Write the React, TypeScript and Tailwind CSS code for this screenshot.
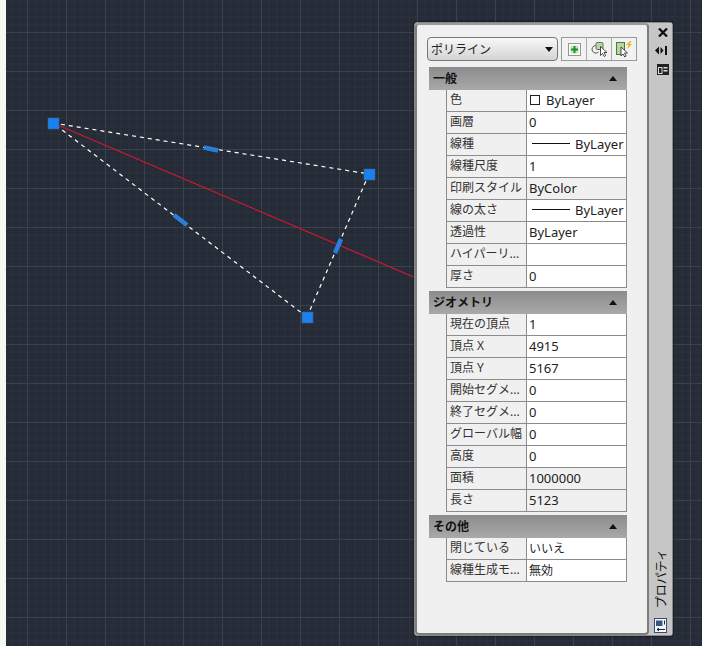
import React from "react";

type Row = { k: string; v: string; ro?: boolean; jp?: boolean; kind?: "color" | "line" };

const sections: { title: string; rows: Row[] }[] = [
  {
    title: "一般",
    rows: [
      { k: "色", v: "ByLayer", kind: "color" },
      { k: "画層", v: "0" },
      { k: "線種", v: "ByLayer", kind: "line" },
      { k: "線種尺度", v: "1" },
      { k: "印刷スタイル", v: "ByColor", ro: true },
      { k: "線の太さ", v: "ByLayer", kind: "line" },
      { k: "透過性", v: "ByLayer" },
      { k: "ハイパーリ...", v: "" },
      { k: "厚さ", v: "0" },
    ],
  },
  {
    title: "ジオメトリ",
    rows: [
      { k: "現在の頂点", v: "1" },
      { k: "頂点 X", v: "4915" },
      { k: "頂点 Y", v: "5167" },
      { k: "開始セグメ...", v: "0" },
      { k: "終了セグメ...", v: "0" },
      { k: "グローバル幅", v: "0" },
      { k: "高度", v: "0" },
      { k: "面積", v: "1000000", ro: true },
      { k: "長さ", v: "5123", ro: true },
    ],
  },
  {
    title: "その他",
    rows: [
      { k: "閉じている", v: "いいえ", jp: true },
      { k: "線種生成モ...", v: "無効", jp: true },
    ],
  },
];

const Grip = ({ x, y }: { x: number; y: number }) => (
  <rect x={x - 5} y={y - 5} width="11" height="11" fill="#1a82f0" stroke="#3f5f85" strokeWidth="0.6" />
);

const MidGrip = ({ x1, y1, x2, y2 }: { x1: number; y1: number; x2: number; y2: number }) => (
  <line x1={x1} y1={y1} x2={x2} y2={y2} stroke="#2a7fdc" strokeWidth="4.500" />
);

const Drawing = () => (
  <svg width="702" height="646" viewBox="0 0 702 646" className="block">
    <line x1="53" y1="123" x2="416" y2="278" stroke="#d01830" strokeWidth="1.200" />
    <g stroke="#ffffff" strokeWidth="1.200" strokeDasharray="4 4" fill="none">
      <line x1="53" y1="123" x2="369" y2="174" />
      <line x1="369" y1="174" x2="307" y2="317" />
      <line x1="307" y1="317" x2="53" y2="123" />
    </g>
    <MidGrip x1={204} y1={147.5} x2={218} y2={150.5} />
    <MidGrip x1={341} y1={239} x2={335} y2={253} />
    <MidGrip x1={174} y1={215} x2={187} y2={225} />
    <Grip x={53} y={123} />
    <Grip x={369} y={174} />
    <Grip x={307} y={317} />
  </svg>
);

const PropRow = ({ row }: { row: Row }) => (
  <div className="flex h-[22px] border-b border-x border-[#8c8c8c] ml-[17px]">
    <div className="w-[80px] shrink-0 border-r border-[#8c8c8c] bg-[#f0f0f0] pl-[3px] text-[12px] leading-[20px] text-[#333] whitespace-nowrap overflow-hidden">
      {row.k}
    </div>
    <div
      className={`flex-1 flex items-center pl-[2px] leading-[20px] text-[#222] whitespace-nowrap overflow-hidden ${
        row.jp ? "text-[12px]" : "text-[13px] pb-[2px]"
      } ${row.ro ? "bg-[#f0f0f0]" : "bg-white"}`}
    >
      {row.kind === "color" && <span className="w-[10px] h-[10px] border border-[#222] bg-white ml-[1px] mr-[6px]" />}
      {row.kind === "line" && <span className="w-[38px] h-px bg-[#111] ml-[3px] mr-[5px]" />}
      {row.v}
    </div>
  </div>
);

const Toolbar = () => (
  <div className="flex items-center gap-[3px]">
    <div className="w-[131px] h-[24px] rounded-[4px] border border-[#777] bg-gradient-to-b from-[#f8f8f8] to-[#d4d4d4] flex items-center justify-between pl-[3px] pr-[4px]">
      <span className="text-[12px] text-[#222] pt-[2px]">ポリライン</span>
      <svg width="8" height="5" viewBox="0 0 8 5">
        <path d="M0 0h8L4 5z" fill="#111" />
      </svg>
    </div>
    <div className="flex h-[24px] w-[76px] border border-[#999] bg-[#f2f2f2]">
      <div className="flex-1 border-r border-[#aaa] flex items-center justify-center">
        <svg width="15" height="15" viewBox="0 0 15 15">
          <rect x="1.500" y="1.500" width="12" height="12" fill="#fff" stroke="#333" strokeDasharray="1 1" />
          <rect x="3.500" y="3.500" width="8" height="8" fill="#c8e6bd" />
          <path d="M7.500 4v7M4 7.500h7" stroke="#12932a" strokeWidth="2" />
        </svg>
      </div>
      <div className="flex-1 border-r border-[#aaa] flex items-center justify-center">
        <svg width="20" height="18" viewBox="0 0 20 18">
          <rect x="7" y="2.500" width="7" height="7" rx="1" fill="#b9d6a4" stroke="#5e7c55" />
          <path d="M6.500 5.500a3.800 3.800 0 1 0 3 6.500" fill="none" stroke="#555" />
          <path d="M11.500 6.500v9l2-2 1.800 3 1.400-1-1.700-3h3z" fill="#fff" stroke="#222" strokeWidth="0.8" />
        </svg>
      </div>
      <div className="flex-1 flex items-center justify-center">
        <svg width="20" height="18" viewBox="0 0 20 18">
          <rect x="2.500" y="2.500" width="8" height="12" fill="#b7d6a0" stroke="#4d7a3d" />
          <path d="M7 7v9l2-2 1.800 3 1.400-1-1.700-3h3z" fill="#fff" stroke="#222" strokeWidth="0.8" />
          <path d="M16 1l-4 4h2.500l-1.500 4 5-5h-2.500l2-3z" fill="#f0b429" />
        </svg>
      </div>
    </div>
  </div>
);

const SideBar = () => (
  <div className="w-[24px] bg-[#c6c6c6] flex flex-col items-start pt-[5px] pb-[2px]">
    <svg width="10" height="9" viewBox="0 0 10 9" className="ml-[9px]">
      <path d="M1 .5l8 8M9 .5l-8 8" stroke="#111" strokeWidth="2.300" />
    </svg>
    <svg width="12" height="9" viewBox="0 0 12 9" className="mt-[9px] ml-[6px]">
      <path d="M0 4.500 4 .5v8zM5.500 1l3 3.500-3 3.500z" fill="#111" />
      <rect x="10" y="0" width="2" height="9" fill="#111" />
    </svg>
    <svg width="12" height="11" viewBox="0 0 12 11" className="mt-[9px] ml-[8px]">
      <rect width="12" height="11" fill="#222" />
      <rect x="1.500" y="3.500" width="3.500" height="6" fill="none" stroke="#ddd" />
      <rect x="6.500" y="3" width="4" height="1.500" fill="#ddd" />
      <rect x="6.500" y="6" width="4" height="1.500" fill="#ddd" />
    </svg>
    <div className="mt-auto ml-[5px] text-[12px] leading-[16px] text-[#111] rotate-180 [writing-mode:vertical-rl] [text-orientation:sideways]">
      プロパティ
    </div>
    <svg width="13" height="15" viewBox="0 0 13 15" className="mt-[10px] ml-[5px]">
      <rect x="0.500" y="0.500" width="12" height="14" fill="#f4f6fa" stroke="#2f4f75" />
      <rect x="2" y="2.500" width="6.500" height="5.500" fill="#33567f" />
      <path d="M10.500 2.500v4M3 11.500h8M3 11.500l2-1.500M3 11.500l2 1.500" stroke="#223" fill="none" />
    </svg>
  </div>
);

export default function App() {
  return (
    <div className="relative w-[702px] h-[646px] overflow-hidden bg-[#f5f9f1] pl-[6px] font-['Noto_Sans','Noto_Sans_CJK_JP',sans-serif]">
      <div className="w-full h-full relative bg-[#252b37] bg-[linear-gradient(#3a404c_1px,transparent_1px),linear-gradient(90deg,#3a404c_1px,transparent_1px),linear-gradient(#2b313d_1px,transparent_1px),linear-gradient(90deg,#2b313d_1px,transparent_1px)] bg-[size:39px_39px,39px_39px,7.8px_7.8px,7.8px_7.8px] bg-[position:21px_32px,21px_32px,21px_32px,21px_32px]" />
      <div className="absolute inset-0">
        <Drawing />
      </div>

      <div className="absolute left-[414px] top-[22px] w-[259px] h-[614px] flex rounded-[3px] border border-[#8a8a8a] bg-[#c6c6c6] shadow-[0_0_2px_#000]">
        <div className="flex-1 rounded-[4px] border-2 border-[#7d7d7d] border-t-[#9a9a9a] bg-[#f0f0f0] pt-[12px] pl-[10px] pr-[10px]">
          <Toolbar />
          <div className="mt-[6px] w-[198px] ml-[2px]">
            {sections.map((s) => (
              <div key={s.title} className="mb-[3px]">
                <div className="h-[23px] flex items-center justify-between pl-[4px] pr-[10px] bg-gradient-to-b from-[#8c8c8c] to-[#a9a9a9]">
                  <span className="text-[12px] font-bold text-[#111]">{s.title}</span>
                  <svg width="8" height="5" viewBox="0 0 8 5">
                    <path d="M4 0l4 5H0z" fill="#111" />
                  </svg>
                </div>
                {s.rows.map((r) => (
                  <PropRow key={r.k} row={r} />
                ))}
              </div>
            ))}
          </div>
        </div>
        <SideBar />
      </div>
    </div>
  );
}
